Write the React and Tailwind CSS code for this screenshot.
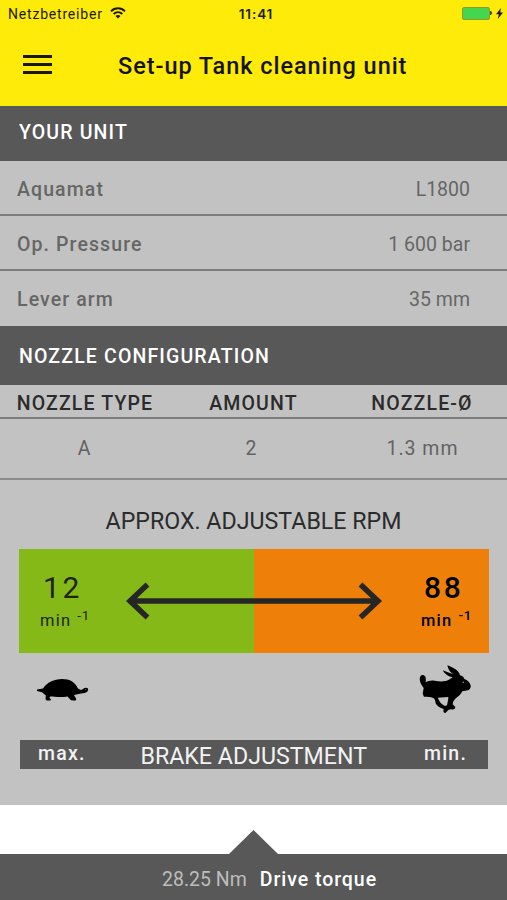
import React from 'react';

const unitRows = [
    { label: 'Aquamat', value: 'L1800' },
    { label: 'Op. Pressure', value: '1 600 bar' },
    { label: 'Lever arm', value: '35 mm' },
];

const StatusBar = () => (
    <div className="h-7 grid grid-cols-3 items-center px-2 text-[14px] text-[#1c1a00]">
        <div className="flex items-center">
            <span className="tracking-[0.8px]">Netzbetreiber</span>
            <svg className="ml-[7px] -mt-0.5" width="16" height="12" viewBox="0 0 16 12" fill="none" stroke="currentColor" strokeWidth="1.9">
                <path d="M1 4.3C5 .3 11 .3 15 4.3" />
                <path d="M3.6 7C6.2 4.5 9.8 4.5 12.4 7" />
                <path d="M8 11.6 5.5 9C6.9 7.7 9.1 7.7 10.5 9Z" fill="currentColor" stroke="none" />
            </svg>
        </div>
        <div className="text-center font-semibold tracking-[0.9px] pl-[5px] font-['Inter',sans-serif] text-[13.5px]">11:41</div>
        <div className="flex justify-end items-center -mr-[4px] -mt-0.5">
            <div className="w-[28px] h-[13px] rounded-[2px] bg-[#45d64f] border border-[#8f9c22]"></div>
            <div className="w-[2px] h-[4px] rounded-r-full bg-[#3b3800]"></div>
            <svg className="ml-[4px]" width="7" height="11" viewBox="0 0 7 11" fill="currentColor">
                <path d="M5 0 0 6.2h2.8L1.8 11 7 4.6H4.2Z" />
            </svg>
        </div>
    </div>
);

const Header = () => (
    <header className="h-[106px] bg-[#ffeb0a]">
        <StatusBar />
        <div className="flex items-center h-[77px] pl-[23px]">
            <div className="w-[29px] flex flex-col gap-[5px] mt-[-5px]">
                <span className="h-[3px] bg-[#1a1800]"></span>
                <span className="h-[3px] bg-[#1a1800]"></span>
                <span className="h-[3px] bg-[#1a1800]"></span>
            </div>
            <h1 className="ml-[66px] mt-px text-[23.5px] font-medium tracking-[0.95px] text-[#141300] whitespace-nowrap">Set-up Tank cleaning unit</h1>
        </div>
    </header>
);

const Tortoise = () => (
    <svg width="52" height="24" viewBox="0 0 52 24" fill="#000">
        <path d="M0 11.500 6 10.500C10 4.500 17 1 25 1 33 1 38 4 41 10.500L44 12C46 11.500 46.500 9.800 49 9.800 51 9.800 51.500 11 51 12.500 50 14.800 47 15.300 44 15.600L37 17 39 20.500C39.500 22 39 22.800 37 22.600L34 22.300 30.500 18.500C26 19.300 18 19 13 18.500L12.500 20 14 21.500 13.500 22.500H9.500L8.500 21 8.800 17.500 5 14.300 0 13Z" />
        <circle cx="48.700" cy="11.500" r=".6" fill="#777" />
    </svg>
);

const Hare = () => (
    <svg width="53" height="49" viewBox="28 30 159 147" fill="#000">
        <path d="M30 72C31 62 35 59 40 60 47 61 50 68 48 82 56 77 65 75 75 77 88 80 98 80 108 78 118 76 123 71 129 67 116 65 106 59 99 46 109 50 120 54 131 58 121 51 115 43 113 31 129 37 147 45 151 61 158 62 162 66 164 72 174 75 180 82 183 91 184 98 181 104 175 106L158 109C154 117 149 122 142 127 135 133 130 138 129 148L137 156C137 162 133 165 124 163L117 164 107 174C102 174 100 170 102 162 91 159 81 153 78 145 77 138 76 133 71 129 63 124 54 126 43 125L39 116 42 99C36 92 30 82 30 72Z" />
        <path d="M84 128 116 126C116 134 114 141 112 151L106 153C97 149 91 144 88 136Z" fill="#c2c2c2" />
        <circle cx="161" cy="82" r="2.500" fill="#888" />
    </svg>
);

const Rpm = ({ value, className }) => (
    <div className={className}>
        <div className="pl-[3px] text-[30px] leading-[30px] tracking-[2.6px]">{value}</div>
        <div className="flex items-start text-[16.5px] leading-[22px] tracking-[1.2px] pt-[7px]">
            min
            <span className="ml-[6px] -mt-[5px] text-[13.5px] leading-[20px] tracking-[0.8px]">-1</span>
        </div>
    </div>
);

export default function App() {
    return (
        <div className="w-[507px] h-[900px] flex flex-col bg-white overflow-hidden font-['Roboto',sans-serif]">
            <Header />

            <main className="h-[699px] bg-[#c2c2c2]">
                <h2 className="h-[55px] bg-[#585858] text-white text-[19.5px] leading-[54px] font-medium tracking-[1.15px] pl-[19px]">YOUR UNIT</h2>
                {unitRows.map((row, i) => (
                    <div key={row.label} className={`h-[55px] flex justify-between items-center pl-[17px] pr-[37px] text-[19.5px] text-[#666] ${i < 2 ? 'pt-[5px] border-b-2 border-[#7c7c7c]' : 'pt-[3px]'}`}>
                        <span className="font-medium tracking-[1.1px]">{row.label}</span>
                        <span>{row.value}</span>
                    </div>
                ))}

                <h2 className="h-[59px] bg-[#585858] text-white text-[19.5px] leading-[61px] font-medium tracking-[1.15px] pl-[19px]">NOZZLE CONFIGURATION</h2>
                <div className="h-[34px] grid grid-cols-[170px_167px_170px] text-center text-[19.5px] leading-[38px] font-medium tracking-[1.15px] text-[#2b2b2b] border-b-2 border-[#7c7c7c]">
                    <span>NOZZLE TYPE</span>
                    <span>AMOUNT</span>
                    <span>NOZZLE-Ø</span>
                </div>
                <div className="h-[61px] grid grid-cols-[169px_165px_177px] text-center text-[19.5px] leading-[60px] tracking-[1px] text-[#626262] border-b-2 border-[#8c8c8c]">
                    <span>A</span>
                    <span>2</span>
                    <span>1.3 mm</span>
                </div>

                <h3 className="h-[69px] pt-[26px] text-center text-[23.2px] leading-[30px] text-[#2b2b2b]">APPROX. ADJUSTABLE RPM</h3>

                <div className="mx-[19px] h-[104px] mb-px grid grid-cols-2 w-[470px] relative">
                    <div className="bg-[#84b918] pt-[24px] pl-[21px]">
                        <Rpm value="12" className="text-[#1d2410]" />
                    </div>
                    <div className="bg-[#ee800a] pt-[24px] pl-[167px]">
                        <Rpm value="88" className="text-black font-medium" />
                    </div>
                    <svg className="absolute left-[106px] top-[32px]" width="258" height="42" viewBox="0 0 258 42" fill="none" stroke="#262626" strokeWidth="5.5">
                        <path d="M4 20H254M22.500 3.500 5 20 22.500 36.500M235.500 3.500 253 20 235.500 36.500" />
                    </svg>
                </div>

                <div className="h-[86px] flex justify-between items-start pl-[37px] pr-[35px] pt-[11px]">
                    <div className="pt-[13px]"><Tortoise /></div>
                    <Hare />
                </div>

                <div className="ml-5 w-[468px] h-[29px] bg-[#585858] text-[#f2f2f2] flex justify-between pl-[18px] pr-[21px]">
                    <span className="text-[19.5px] leading-[27px] font-medium tracking-[1.2px]">max.</span>
                    <span className="text-[23.2px] leading-[33px] -ml-[2px]">BRAKE ADJUSTMENT</span>
                    <span className="text-[19.5px] leading-[27px] font-medium tracking-[1.2px]">min.</span>
                </div>
            </main>

            <div className="h-[49px] flex justify-center items-end">
                <svg width="49" height="24" viewBox="0 0 49 24">
                    <path d="M0 24 24.500 0 49 24Z" fill="#585858" />
                </svg>
            </div>
            <footer className="h-[46px] bg-[#585858] flex pl-[162px] text-[19.5px] leading-[52px]">
                <span className="text-[#bdbdbd]">28.25 Nm</span>
                <span className="ml-[13px] text-white font-medium tracking-[0.95px]">Drive torque</span>
            </footer>
        </div>
    );
}
